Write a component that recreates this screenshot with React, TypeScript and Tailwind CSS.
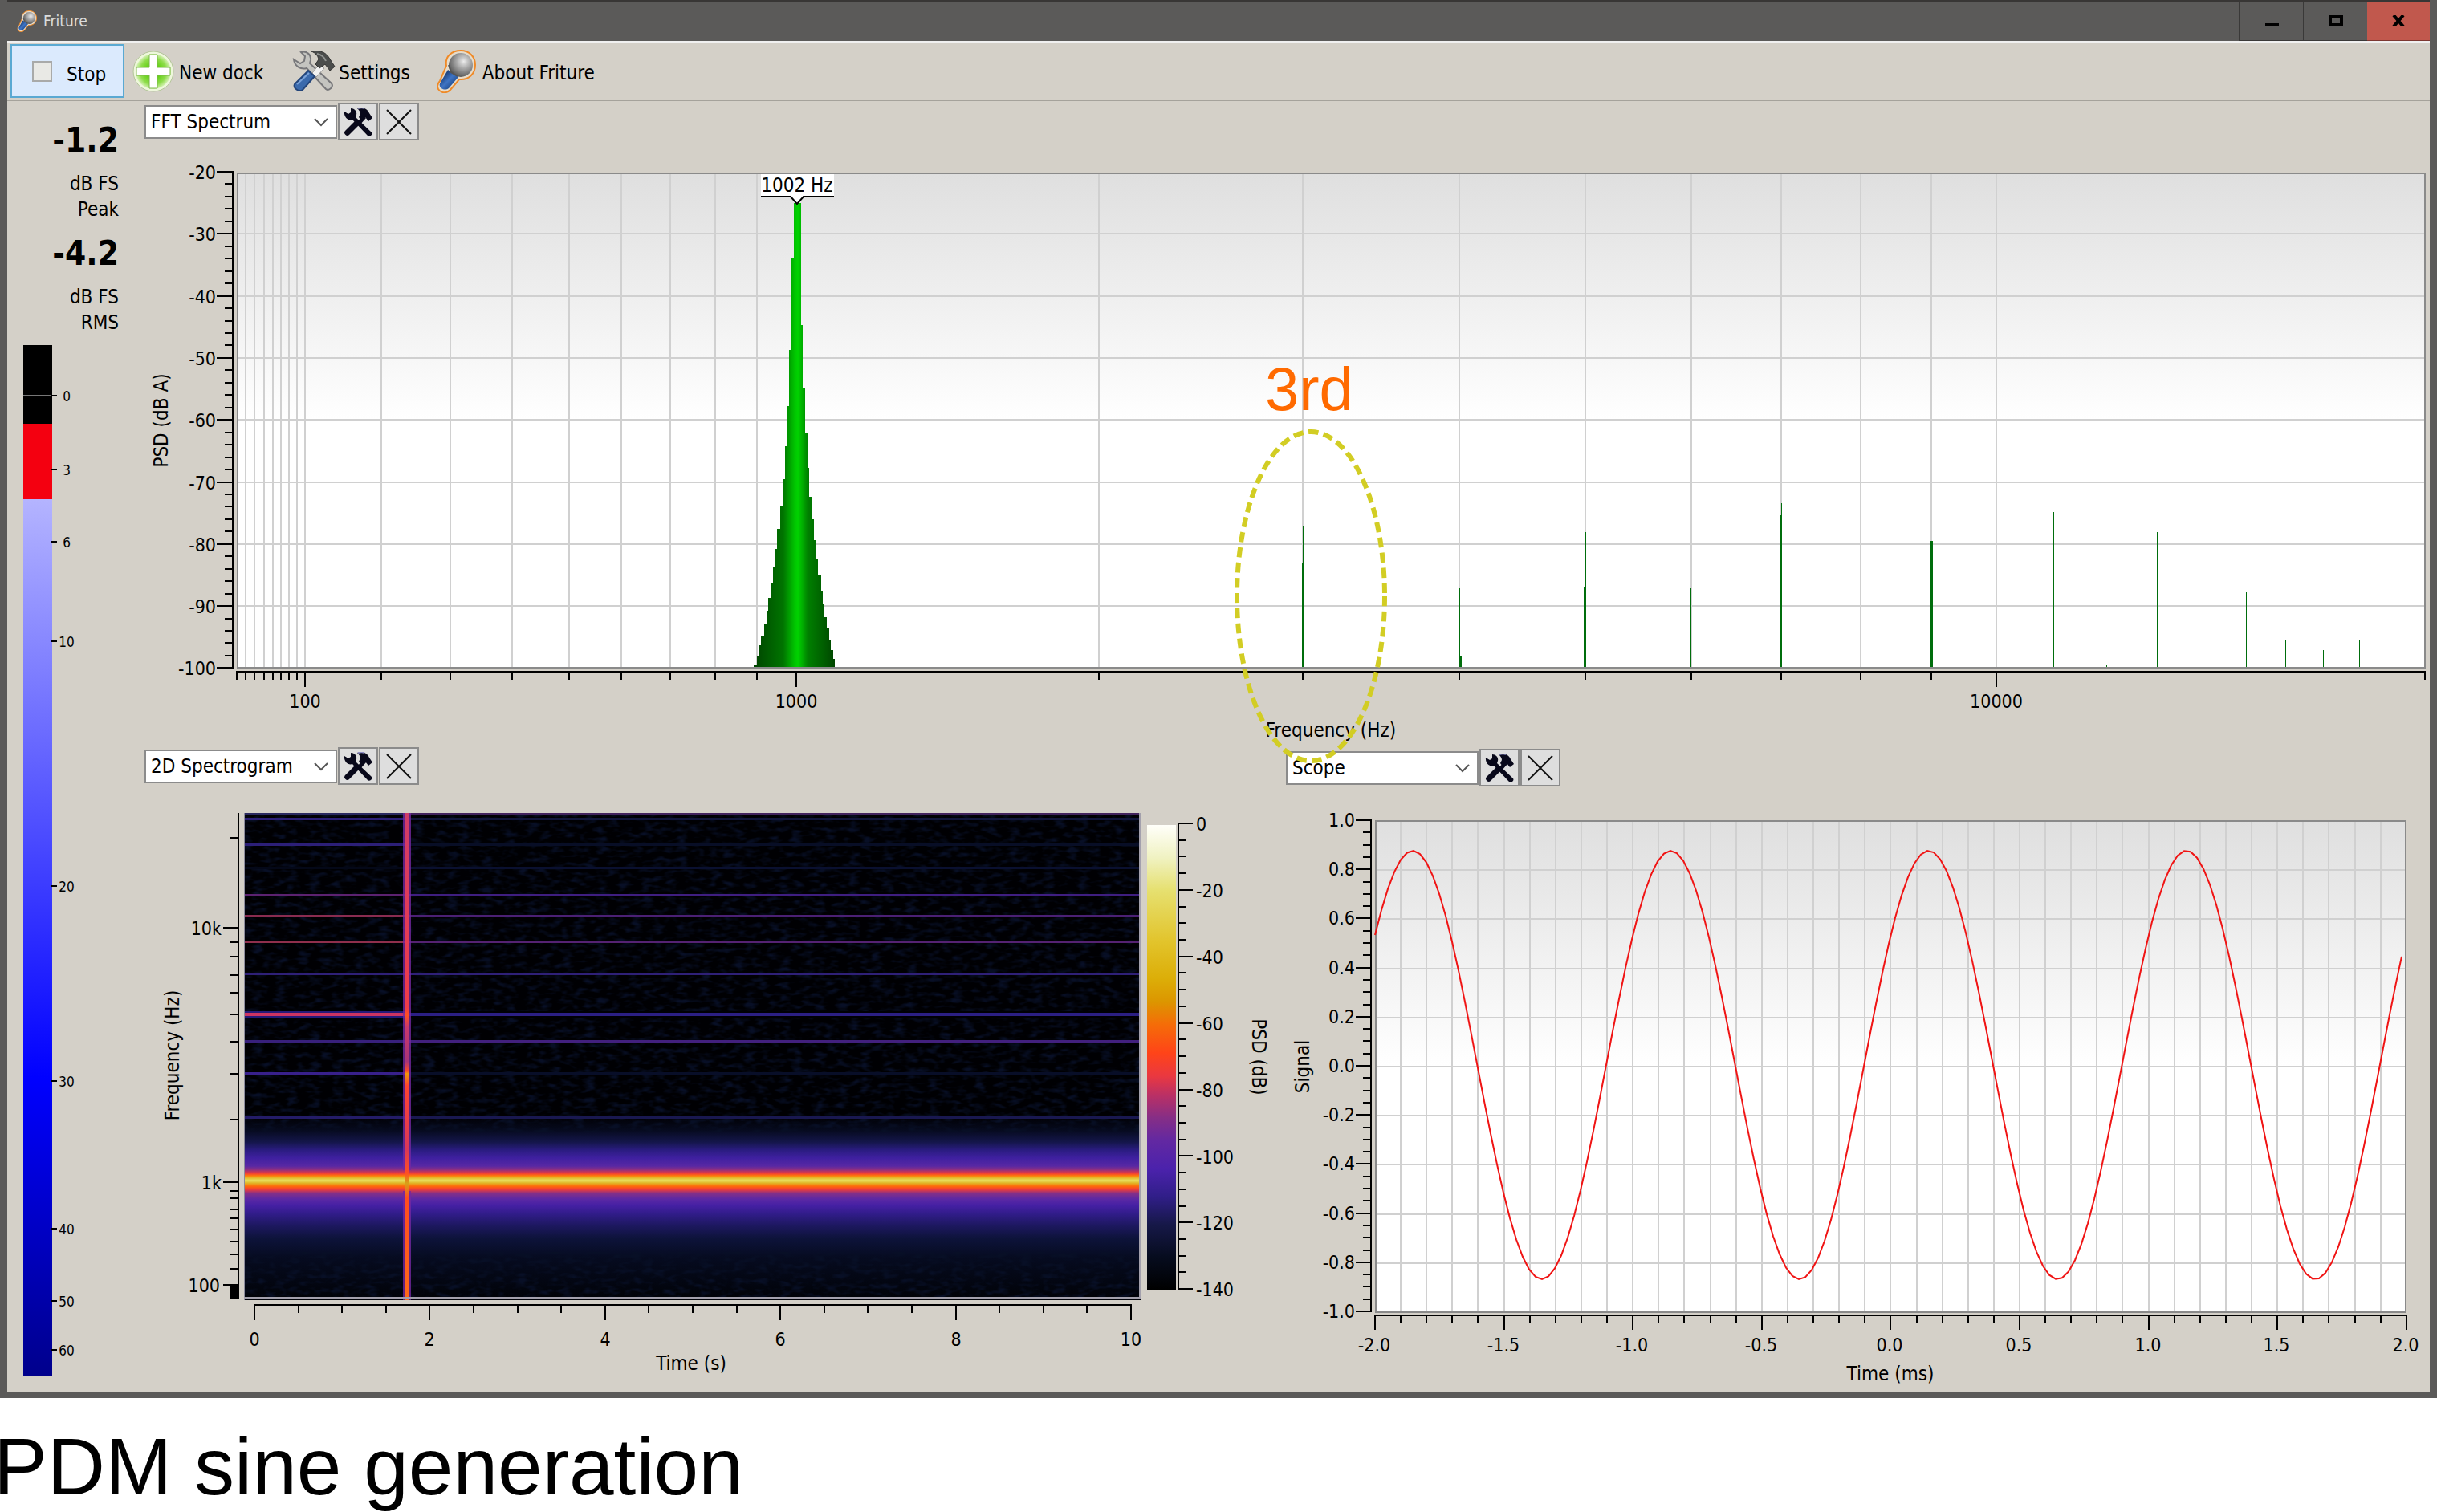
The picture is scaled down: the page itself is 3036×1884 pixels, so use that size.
import React from 'react'

// ============================================================================
// TYPES AND DATA
// ============================================================================

interface Tick {
  at: number
  label?: string
}

interface DockHeaderProps {
  id: string
  value: string
}

const METER_TICKS: Tick[] = [
  { at: 493, label: '0' },
  { at: 585, label: '3' },
  { at: 675, label: '6' },
  { at: 799, label: '10' },
  { at: 1104, label: '20' },
  { at: 1347, label: '30' },
  { at: 1531, label: '40' },
  { at: 1621, label: '50' },
  { at: 1682, label: '60' }
]

const SPECTRUM_X: Tick[] = [
  { at: 295 }, { at: 306 }, { at: 317 }, { at: 329 }, { at: 340 }, { at: 350 }, { at: 360 }, { at: 370 },
  { at: 380, label: '100' },
  { at: 475 }, { at: 561 }, { at: 638 }, { at: 709 }, { at: 774 }, { at: 835 }, { at: 891 }, { at: 943 },
  { at: 992, label: '1000' },
  { at: 1369 }, { at: 1623 }, { at: 1818 }, { at: 1975 }, { at: 2107 }, { at: 2219 }, { at: 2318 }, { at: 2406 },
  { at: 2487, label: '10000' },
  { at: 3021 }
]

// left and right flanks of the main peak, as [x, top] steps
const PEAK_LEFT = [
  [989, 253], [986, 322], [983, 436], [981, 506], [978, 556], [976, 597], [972, 631], [968, 659], [966, 684],
  [963, 706], [960, 726], [957, 745], [955, 761], [952, 777], [948, 792], [946, 804], [943, 817], [939, 829]
]
const PEAK_RIGHT = [
  [998, 253], [1000, 405], [1003, 484], [1006, 540], [1008, 583], [1011, 619], [1014, 647], [1017, 673], [1019, 697],
  [1023, 717], [1025, 736], [1027, 753], [1030, 769], [1033, 783], [1035, 797], [1038, 810], [1040, 821]
]

// x, top, width
const HARMONICS = [
  [1623, 655, 1], [1622, 702, 3], [1818, 733, 1], [1817, 748, 2], [1818, 817, 3], [1974, 647, 1], [1974, 663, 2],
  [1973, 732, 3], [2106, 733, 1], [2219, 627, 1], [2218, 642, 2], [2318, 783, 1], [2405, 674, 3], [2486, 765, 1],
  [2558, 638, 1], [2624, 828, 1], [2687, 663, 1], [2744, 738, 1], [2798, 738, 1], [2847, 797, 1], [2894, 810, 1],
  [2939, 797, 1]
] as const

// y, thickness, colour before and after the level change
const SPECTRAL_LINES: [number, number, string, string][] = [
  [1013, 2, '#2b2a60', '#43245e'],
  [1019, 3, '#2c1f78', '#12163c'],
  [1051, 3, '#2c1f78', '#080e26'],
  [1080, 3, '#040818', '#0a1030'],
  [1114, 3, '#5c2270', '#3f1e80'],
  [1140, 3, '#8a2c50', '#4b2074'],
  [1172, 3, '#8f2f4c', '#552272'],
  [1212, 3, '#2f2078', '#2f2078'],
  [1260, 8, '#241a78', '#000005'],
  [1262, 4, '#cc3462', '#2b1f84'],
  [1296, 3, '#38207c', '#42207e'],
  [1336, 4, '#38208c', '#080e28'],
  [1391, 3, '#241c68', '#191850']
]

const SPECTROGRAM_MINOR = [1044, 1174, 1192, 1215, 1237, 1264, 1298, 1338, 1395, 1484, 1493, 1507, 1518, 1532, 1547, 1563, 1581]

const BAND: [number, string][] = [
  [1390, '#000003'], [1408, '#060a1e'], [1423, '#14164a'], [1433, '#2a1c80'], [1443, '#3f20a0'], [1453, '#5828a4'],
  [1458, '#95307c'], [1462, '#f03a3a'], [1465, '#ff7a08'], [1468, '#e2c030'], [1471, '#e8e060'], [1474, '#e0b828'],
  [1478, '#ff6c08'], [1482, '#f23c38'], [1487, '#843088'], [1494, '#5c28a4'], [1502, '#4520a4'], [1513, '#301c88'],
  [1527, '#1d1860'], [1543, '#0d133a'], [1567, '#060b20'], [1616, '#010309']
]

const COLOR_SCALE: [number, string][] = [
  [0, '#fffffa'], [7, '#f0f2c2'], [14, '#e6e070'], [25, '#e2c42c'], [33, '#dcae08'], [38, '#dc9600'], [43, '#f56c08'],
  [49, '#ff4418'], [54, '#ea3840'], [58, '#bc3064'], [63, '#862e86'], [68, '#6228a2'], [74, '#4b22ac'], [80, '#301e88'],
  [86, '#161848'], [93, '#060c1e'], [100, '#000000']
]

const range = (n: number) => Array.from({ length: n }, (_, i) => i)

// ============================================================================
// ICONS
// ============================================================================

function MicIcon({ className }: { className: string }) {
  return (
    <svg viewBox="0 0 50 54" className={className} aria-hidden="true">
      <defs>
        <radialGradient id="mic-head" cx="0.62" cy="0.35" r="0.65">
          <stop offset="0" stopColor="#ececec" />
          <stop offset="0.45" stopColor="#a9a9a9" />
          <stop offset="1" stopColor="#5c5c5c" />
        </radialGradient>
        <linearGradient id="mic-grip" x1="0" y1="0" x2="1" y2="1">
          <stop offset="0.2" stopColor="#16386f" />
          <stop offset="0.5" stopColor="#3f74c4" />
          <stop offset="0.8" stopColor="#1d4787" />
        </linearGradient>
      </defs>
      <path
        d="M13 20C11 8 20 1 31 1c11 0 18 8 18 18 0 11-8 19-20 18L18 50c-5 5-12 4-15-1-2-4-1-7 2-10z"
        fill="#e6dccb"
        stroke="#ef8a28"
        strokeWidth="2"
      />
      <path d="M15 25L5 42c-2 6 6 10 11 6l12-14z" fill="url(#mic-grip)" />
      <circle cx="31" cy="19" r="15" fill="url(#mic-head)" />
      <path d="M16 19l3 9 8 5" fill="none" stroke="#555" strokeWidth="2" />
    </svg>
  )
}

function AddIcon() {
  return (
    <svg viewBox="0 0 52 52" className="h-[52px] w-[52px]" aria-hidden="true">
      <defs>
        <radialGradient id="add-disc" cx="0.5" cy="0.5" r="0.5">
          <stop offset="0.35" stopColor="#5fcf10" />
          <stop offset="0.75" stopColor="#8fdd4c" />
          <stop offset="1" stopColor="#d5f2b4" />
        </radialGradient>
      </defs>
      <circle cx="26" cy="26" r="25" fill="#eef7dc" stroke="#b4c69a" strokeWidth="1" />
      <circle cx="26" cy="26" r="22" fill="url(#add-disc)" />
      <path d="M21 5h10v16h16v10H31v16H21V31H5V21h16z" fill="#fff" stroke="#7fb84c" strokeWidth="1" />
    </svg>
  )
}

function SettingsIcon() {
  return (
    <svg viewBox="0 0 54 52" className="h-[52px] w-[54px]" aria-hidden="true">
      <path
        d="M2 11l8 5 5-3 1-6-5-5c7-2 13 3 12 10l-1 4 27 25c3 4-3 10-7 7L18 22c-7 2-15-2-16-11z"
        fill="#c4c4c0"
        stroke="#77777a"
        strokeWidth="2"
      />
      <path d="M25 28L34 17l6 5-10 11z" fill="#f1f1f1" stroke="#999" strokeWidth="1" />
      <path d="M3 42L20 25l8 7-15 17c-5 3-12-2-10-7z" fill="#3b6aac" stroke="#24457a" strokeWidth="2" />
      <path d="M6 42l15-14" stroke="#7ba2d8" strokeWidth="2" />
      <path d="M24 1c10-2 18 1 22 8l7 11-6 5-6-8-7 5-5-5 4-6c-1-5-4-8-9-10z" fill="#4b4d4c" stroke="#333" strokeWidth="1" />
      <path d="M31 4c5 1 9 4 11 9" stroke="#8f9290" strokeWidth="2" fill="none" />
    </svg>
  )
}

function ToolsIcon() {
  return (
    <svg viewBox="0 0 36 36" className="h-9 w-9" aria-hidden="true">
      <g fill="#08081a">
        <path d="M1 5l5 3 3-2V1c5 0 8 4 7 8l-1 3 20 19c2 3-3 6-5 4L11 15C6 17 0 12 1 5z" />
        <path d="M2 29l13-13 5 5L7 34c-3 3-8-2-5-5z" />
        <path d="M17 1c7-2 13 1 15 6l4 6-5 4-4-5-5 4-3-4 2-4c0-3-2-5-4-7z" />
        <path d="M17 18l7-8 4 3-8 9z" />
      </g>
      <path d="M18 1c3-1 6-1 8 0" stroke="#8d8dc4" strokeWidth="2" fill="none" />
    </svg>
  )
}

// ============================================================================
// WINDOW CHROME
// ============================================================================

function TitleBar() {
  return (
    <header className="flex h-[51px] items-stretch border-t-2 border-[#383635]">
      <div className="flex flex-1 items-center gap-2 pl-3 text-[19px] text-[#dcdcdc]">
        <MicIcon className="h-[27px] w-[25px]" />
        <h1>Friture</h1>
      </div>
      <button type="button" aria-label="Minimize" className="flex w-20 items-center justify-center border-l border-b border-[#3a3938]">
        <svg viewBox="0 0 18 16" className="h-4 w-[18px]">
          <rect x="1" y="11" width="17" height="3" />
        </svg>
      </button>
      <button type="button" aria-label="Maximize" className="flex w-20 items-center justify-center border-l border-b border-[#3a3938]">
        <svg viewBox="0 0 18 14" className="h-3.5 w-[18px]">
          <rect x="2" y="2" width="14" height="10" fill="none" stroke="#000" strokeWidth="4" />
        </svg>
      </button>
      <button type="button" aria-label="Close" className="flex w-[78px] items-center justify-center border-b border-[#7d3832] bg-[#c1584d]">
        <svg viewBox="0 0 16 14" className="h-3.5 w-4">
          <path d="M2 0l12 14M14 0L2 14" stroke="#000" strokeWidth="4" />
        </svg>
      </button>
    </header>
  )
}

function Toolbar() {
  return (
    <nav className="flex h-[73px] items-center border-b-2 border-[#a5a29b] pl-1">
      <button type="button" className="flex h-[67px] w-[142px] items-center gap-[18px] border-2 border-[#5aa9d2] bg-[#dbeafd] pl-[25px]">
        <span className="h-[26px] w-[25px] border-2 border-[#a9aaa9] bg-[#e9e9e5]"></span>
        <span className="pt-2">Stop</span>
      </button>
      <button type="button" className="ml-2.5 flex items-center gap-1.5">
        <AddIcon />
        <span className="pt-1">New dock</span>
      </button>
      <button type="button" className="ml-9 flex items-center gap-1">
        <SettingsIcon />
        <span className="pt-1">Settings</span>
      </button>
      <button type="button" className="ml-8 flex items-center gap-2">
        <MicIcon className="h-[54px] w-[50px]" />
        <span className="pt-1">About Friture</span>
      </button>
    </nav>
  )
}

function DockHeader({ id, value }: DockHeaderProps) {
  return (
    <div className="flex h-[47px] items-center gap-px">
      <div className="relative">
        <select
          id={id}
          aria-label="Dock type"
          defaultValue={value}
          className="block h-[42px] w-[240px] appearance-none border-2 border-[#8b8b8b] bg-white pl-1.5 leading-9 text-black"
        >
          <option>{value}</option>
        </select>
        <svg viewBox="0 0 18 12" className="pointer-events-none absolute right-[11px] top-[15px] h-3 w-[18px]" aria-hidden="true">
          <path d="M1 2l8 8 8-8" fill="none" stroke="#555" strokeWidth="2" />
        </svg>
      </div>
      <button type="button" aria-label="Dock settings" className="flex h-[47px] w-[50px] items-center justify-center border-2 border-[#8b8b8b] bg-[#dedede]">
        <ToolsIcon />
      </button>
      <button type="button" aria-label="Close dock" className="flex h-[47px] w-[50px] items-center justify-center border-2 border-[#8b8b8b] bg-[#dedede]">
        <svg viewBox="0 0 32 32" className="h-8 w-8">
          <path d="M1 1l30 30M31 1L1 31" stroke="#111" strokeWidth="2" />
        </svg>
      </button>
    </div>
  )
}

// ============================================================================
// LEVELS
// ============================================================================

function Reading({ value, kind }: { value: string; kind: string }) {
  return (
    <div className="text-right leading-8">
      <div className="mb-[13px] text-[42px] font-bold leading-[50px]">{value}</div>
      <div>dB FS</div>
      <div>{kind}</div>
    </div>
  )
}

function Levels() {
  return (
    <aside className="w-[171px] shrink-0 pt-6">
      <div className="flex flex-col gap-3.5 pr-8">
        <Reading value="-1.2" kind="Peak" />
        <Reading value="-4.2" kind="RMS" />
      </div>
      <svg viewBox="9 418 171 1316" className="block w-full text-[17px]" shapeRendering="crispEdges">
        <defs>
          <linearGradient id="meter" x1="0" y1="0" x2="0" y2="1">
            <stop offset="0" stopColor="#b4b4ff" />
            <stop offset="0.66" stopColor="#0000ff" />
            <stop offset="1" stopColor="#00008c" />
          </linearGradient>
        </defs>
        <rect x="29" y="430" width="36" height="98" />
        <rect x="29" y="492" width="36" height="2" fill="#777" />
        <rect x="29" y="528" width="36" height="94" fill="#f40010" />
        <rect x="29" y="622" width="36" height="1092" fill="url(#meter)" />
        {METER_TICKS.map(({ at, label }) => (
          <g key={label}>
            <rect x="64" y={at - 1} width="7" height="2" />
            <text x="83" y={at + 7} textAnchor="middle">{label}</text>
          </g>
        ))}
      </svg>
    </aside>
  )
}

// ============================================================================
// FFT SPECTRUM
// ============================================================================

function peakPath() {
  const left = PEAK_LEFT.slice().reverse().map(([x, y]) => `H${x}V${y}`).join('')
  const right = PEAK_RIGHT.map(([x], i) => `H${x}V${PEAK_RIGHT[i + 1] ? PEAK_RIGHT[i + 1][1] : 831}`).join('')
  return `M939 831${left}${right}Z`
}

function SpectrumPlot() {
  const dbY = (i: number) => Math.round(214 + i * 77.3)

  return (
    <svg viewBox="180 175 2847 756" className="block w-full" shapeRendering="crispEdges">
      <defs>
        <linearGradient id="canvas" x1="0" y1="0" x2="0" y2="1">
          <stop offset="0" stopColor="#dfdfdf" />
          <stop offset="0.5" stopColor="#ffffff" />
        </linearGradient>
        <linearGradient id="peak" gradientUnits="userSpaceOnUse" x1="939" y1="0" x2="1041" y2="0">
          <stop offset="0" stopColor="#004400" />
          <stop offset="0.36" stopColor="#007400" />
          <stop offset="0.5" stopColor="#00c400" />
          <stop offset="0.54" stopColor="#00d200" />
          <stop offset="0.58" stopColor="#00b800" />
          <stop offset="0.66" stopColor="#008000" />
          <stop offset="1" stopColor="#004400" />
        </linearGradient>
      </defs>
      <rect x="296" y="216" width="2725" height="616" fill="url(#canvas)" />
      <g fill="#d0d0d0">
        {SPECTRUM_X.slice(1, -1).map(({ at }) => (
          <rect key={at} x={at - 1} y="216" width="2" height="616" />
        ))}
        {range(7).map(i => (
          <rect key={i} x="296" y={dbY(i + 1) - 1} width="2725" height="2" />
        ))}
      </g>
      <path d={peakPath()} fill="url(#peak)" />
      {HARMONICS.map(([x, y, width]) => (
        <rect key={`${x}-${y}`} x={x} y={y} width={width} height={831 - y} fill="#006d0c" />
      ))}
      <rect x="296" y="216" width="2725" height="616" fill="none" stroke="#8a8a8a" strokeWidth="2" />

      <rect x="948" y="217" width="91" height="28" fill="#fff" />
      <path d="M948 245h37l8 9 8-9h38" fill="#fff" stroke="#000" strokeWidth="2" shapeRendering="auto" />
      <text x="993" y="239" textAnchor="middle" className="text-[24px]">1002 Hz</text>

      {/* level axis */}
      <rect x="289" y="213" width="3" height="621" />
      {range(41).map(i => (
        <rect key={i} x={i % 5 ? 280 : 270} y={Math.round(213 + i * 15.46)} width={i % 5 ? 10 : 20} height="2" />
      ))}
      <g className="text-[23px]" textAnchor="end">
        {range(9).map(i => (
          <text key={i} x="269" y={dbY(i) + 9}>{-20 - i * 10}</text>
        ))}
      </g>
      <text transform="translate(209 524) rotate(-90)" textAnchor="middle">PSD (dB A)</text>

      {/* frequency axis */}
      <rect x="294" y="836" width="2728" height="3" />
      {SPECTRUM_X.map(({ at, label }) => (
        <g key={at}>
          <rect x={at - 1} y="837" width="2" height={label ? 19 : 10} />
          {label && <text x={at} y="882" textAnchor="middle" className="text-[23px]">{label}</text>}
        </g>
      ))}
      <text x="1658" y="918" textAnchor="middle">Frequency (Hz)</text>
    </svg>
  )
}

// ============================================================================
// 2D SPECTROGRAM
// ============================================================================

function SpectrogramPlot() {
  return (
    <svg viewBox="180 978 1422 756" className="block w-full" shapeRendering="crispEdges">
      <defs>
        <linearGradient id="band" gradientUnits="userSpaceOnUse" x1="0" y1="1390" x2="0" y2="1616">
          {BAND.map(([y, color]) => (
            <stop key={y} offset={(y - 1390) / 226} stopColor={color} />
          ))}
        </linearGradient>
        <linearGradient id="burst" x1="0" y1="0" x2="0" y2="1">
          <stop offset="0" stopColor="#d03c68" />
          <stop offset="0.4" stopColor="#f03c48" />
          <stop offset="0.415" stopColor="#ff5020" />
          <stop offset="0.44" stopColor="#c8386c" />
          <stop offset="0.51" stopColor="#a83478" />
          <stop offset="0.53" stopColor="#ff4a28" />
          <stop offset="0.535" stopColor="#f09a08" />
          <stop offset="0.56" stopColor="#ff4430" />
          <stop offset="0.69" stopColor="#d83858" />
          <stop offset="0.74" stopColor="#ff5020" />
          <stop offset="0.76" stopColor="#d8a018" />
          <stop offset="0.79" stopColor="#ff4c20" />
          <stop offset="1" stopColor="#ff6a18" />
        </linearGradient>
        <linearGradient id="scale" x1="0" y1="0" x2="0" y2="1">
          {COLOR_SCALE.map(([offset, color]) => (
            <stop key={offset} offset={`${offset}%`} stopColor={color} />
          ))}
        </linearGradient>
        <filter id="noise" x="0" y="0" width="100%" height="100%" colorInterpolationFilters="sRGB">
          <feTurbulence type="fractalNoise" baseFrequency="0.07 0.16" numOctaves="2" seed="4" />
          <feColorMatrix values="0 0 0 0 0.03  0 0 0 0 0.06  0 0 0 0 0.15  3 0 0 0 -1.4" />
        </filter>
      </defs>

      <rect x="304" y="1013" width="1118" height="607" fill="#000003" />
      <rect x="304" y="1390" width="1118" height="230" fill="url(#band)" />
      <rect x="304" y="1015" width="1118" height="395" filter="url(#noise)" />
      <rect x="304" y="1560" width="1118" height="57" filter="url(#noise)" />
      {SPECTRAL_LINES.map(([y, height, before, after]) => (
        <g key={y}>
          <rect x="304" y={y} width="202" height={height} fill={before} />
          <rect x="506" y={y} width="916" height={height} fill={after} />
        </g>
      ))}
      <rect x="502" y="1013" width="10" height="445" fill="#7428a0" opacity="0.8" />
      <rect x="502" y="1484" width="10" height="136" fill="#7428a0" opacity="0.8" />
      <rect x="504" y="1013" width="6" height="607" fill="url(#burst)" />
      <rect x="304" y="1013" width="1" height="607" fill="#8c8c9c" />
      <rect x="304" y="1616" width="1116" height="2" fill="#a3a0ac" />
      <rect x="1419" y="1013" width="2" height="605" fill="#a3a0ac" />

      {/* frequency axis */}
      <rect x="296" y="1013" width="2" height="606" />
      {SPECTROGRAM_MINOR.map(y => (
        <rect key={y} x="287" y={y - 1} width="10" height="2" />
      ))}
      <rect x="278" y="1155" width="19" height="2" />
      <rect x="278" y="1472" width="19" height="2" />
      <rect x="278" y="1600" width="19" height="2" />
      <rect x="287" y="1601" width="11" height="18" />
      <g className="text-[23px]" textAnchor="end">
        <text x="276" y="1165">10k</text>
        <text x="276" y="1482">1k</text>
        <text x="274" y="1610">100</text>
      </g>
      <text transform="translate(223 1315) rotate(-90)" textAnchor="middle">Frequency (Hz)</text>

      {/* time axis */}
      <rect x="316" y="1625" width="1094" height="2" />
      {range(21).map(i => (
        <rect key={i} x={Math.round(316 + i * 54.6)} y="1625" width="2" height={i % 4 ? 11 : 20} />
      ))}
      <g className="text-[23px]" textAnchor="middle">
        {range(6).map(i => (
          <text key={i} x={Math.round(317 + i * 218.4)} y="1677">{i * 2}</text>
        ))}
      </g>
      <text x="861" y="1707" textAnchor="middle">Time (s)</text>

      {/* color scale */}
      <rect x="1429" y="1028" width="36" height="579" fill="url(#scale)" />
      <rect x="1467" y="1025" width="2" height="582" />
      {range(29).map(i => (
        <rect key={i} x="1468" y={Math.round(1025 + i * 20.72)} width={i % 4 ? 10 : 18} height="2" />
      ))}
      <g className="text-[23px]">
        {range(8).map(i => (
          <text key={i} x="1490" y={Math.round(1035 + i * 82.9)}>{i ? -20 * i : 0}</text>
        ))}
      </g>
      <text transform="translate(1560 1317) rotate(90)" textAnchor="middle">PSD (dB)</text>
    </svg>
  )
}

// ============================================================================
// SCOPE
// ============================================================================

function ScopePlot() {
  const wave = range(161)
    .map(i => {
      const x = Math.min(1713 + i * 8, 2992)
      return `${x},${(1327 - 267 * Math.cos(((x - 1760) / 321.3) * 2 * Math.PI)).toFixed(1)}`
    })
    .join(' ')

  return (
    <svg viewBox="1602 980 1425 754" className="block w-full" shapeRendering="crispEdges">
      <rect x="1714" y="1023" width="1283" height="612" fill="url(#canvas)" />
      <g fill="#d0d0d0">
        {range(39).map(i => (
          <rect key={i} x={Math.round(1712 + (i + 1) * 32.12)} y="1023" width="2" height="612" />
        ))}
        {range(9).map(i => (
          <rect key={i} x="1714" y={Math.round(1022 + (i + 1) * 61.2)} width="1283" height="2" />
        ))}
      </g>
      <rect x="1714" y="1023" width="1283" height="612" fill="none" stroke="#8a8a8a" strokeWidth="2" />
      <polyline points={wave} fill="none" stroke="#f01414" strokeWidth="2" shapeRendering="auto" />

      {/* signal axis */}
      <rect x="1707" y="1021" width="2" height="614" />
      {range(41).map(i => (
        <rect key={i} x={i % 4 ? 1698 : 1689} y={Math.round(1021 + i * 15.3)} width={i % 4 ? 10 : 19} height="2" />
      ))}
      <g className="text-[23px]" textAnchor="end">
        {range(11).map(i => (
          <text key={i} x="1688" y={Math.round(1030 + i * 61.2)}>{((5 - i) / 5).toFixed(1)}</text>
        ))}
      </g>
      <text transform="translate(1631 1329) rotate(-90)" textAnchor="middle">Signal</text>

      {/* time axis */}
      <rect x="1712" y="1638" width="1286" height="2" />
      {range(41).map(i => (
        <rect key={i} x={Math.round(1712 + i * 32.12)} y="1638" width="2" height={i % 5 ? 11 : 19} />
      ))}
      <g className="text-[23px]" textAnchor="middle">
        {range(9).map(i => (
          <text key={i} x={Math.round(1712 + i * 160.6)} y="1684">{((i - 4) / 2).toFixed(1)}</text>
        ))}
      </g>
      <text x="2355" y="1720" textAnchor="middle">Time (ms)</text>
    </svg>
  )
}

// ============================================================================
// ANNOTATION
// ============================================================================

function HarmonicMark() {
  return (
    <svg viewBox="0 0 3036 1742" className="pointer-events-none absolute left-0 top-0 w-full">
      <text x="1576" y="511" fill="#ff6a00" className="font-['Liberation_Sans',Arial,sans-serif] text-[76px]">3rd</text>
      <ellipse cx="1633" cy="743" rx="92" ry="205" fill="none" stroke="#d2cd24" strokeWidth="6" strokeDasharray="12.5 6.5" />
    </svg>
  )
}

// ============================================================================
// APP
// ============================================================================

export default function App() {
  return (
    <div className="overflow-x-hidden bg-white text-black">
      <div className="relative bg-[#5b5a59] px-[9px] pb-2 font-['DejaVu_Sans_Condensed','Open_Sans',sans-serif] text-[24px]">
        <TitleBar />
        <div className="border-t-2 border-[#f0f0f0] bg-[#d4d0c8]">
          <Toolbar />
          <div className="flex">
            <Levels />
            <main className="min-w-0 flex-1 pt-0.5">
              <section>
                <DockHeader id="dock-spectrum" value="FFT Spectrum" />
                <SpectrumPlot />
              </section>
              <div className="grid grid-cols-[1422fr_1425fr]">
                <section>
                  <DockHeader id="dock-spectrogram" value="2D Spectrogram" />
                  <SpectrogramPlot />
                </section>
                <section className="pt-0.5">
                  <DockHeader id="dock-scope" value="Scope" />
                  <ScopePlot />
                </section>
              </div>
            </main>
          </div>
        </div>
        <HarmonicMark />
      </div>
      <p className="-ml-2 pt-7 font-['Liberation_Sans',Arial,sans-serif] text-[100px] leading-[114px]">PDM sine generation</p>
    </div>
  )
}
